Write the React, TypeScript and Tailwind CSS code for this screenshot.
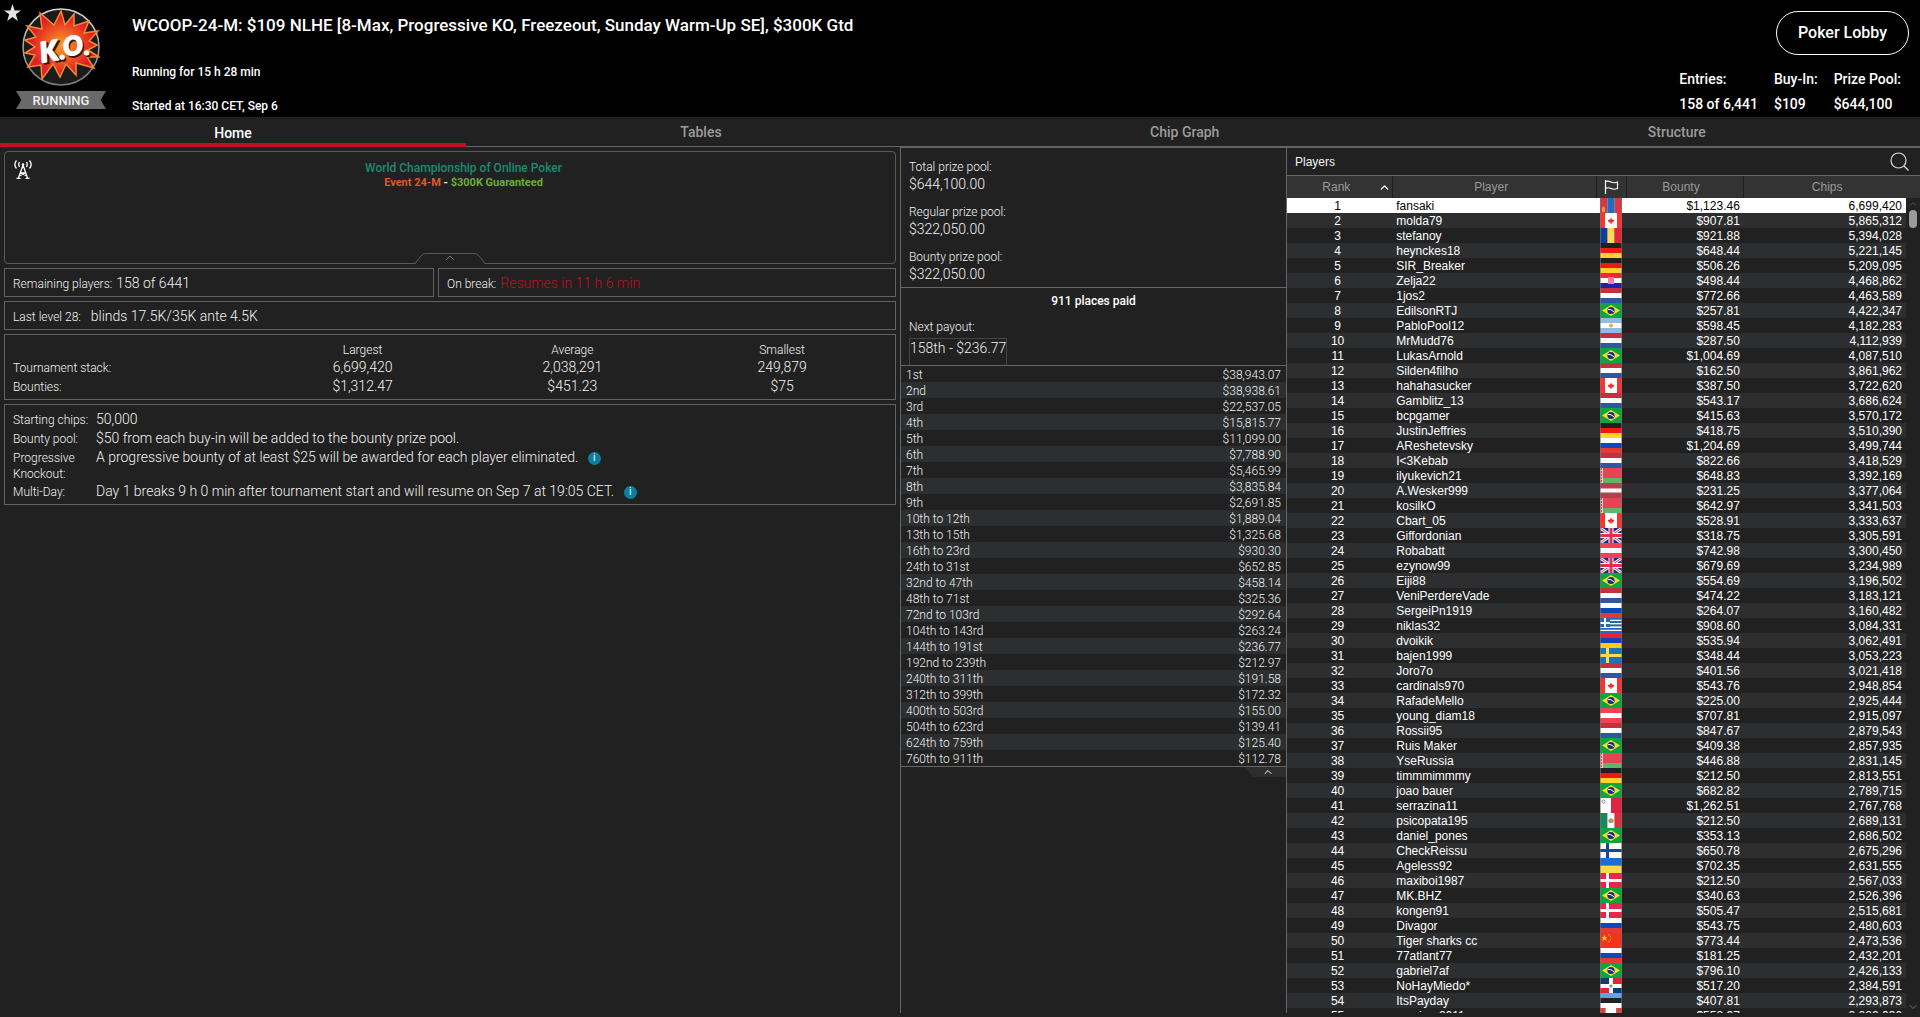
import type { ReactNode } from "react";
import { ChevronUp, ChevronDown } from "lucide-react";

const payouts = [
  ["1st", "$38,943.07"],
  ["2nd", "$38,938.61"],
  ["3rd", "$22,537.05"],
  ["4th", "$15,815.77"],
  ["5th", "$11,099.00"],
  ["6th", "$7,788.90"],
  ["7th", "$5,465.99"],
  ["8th", "$3,835.84"],
  ["9th", "$2,691.85"],
  ["10th to 12th", "$1,889.04"],
  ["13th to 15th", "$1,325.68"],
  ["16th to 23rd", "$930.30"],
  ["24th to 31st", "$652.85"],
  ["32nd to 47th", "$458.14"],
  ["48th to 71st", "$325.36"],
  ["72nd to 103rd", "$292.64"],
  ["104th to 143rd", "$263.24"],
  ["144th to 191st", "$236.77"],
  ["192nd to 239th", "$212.97"],
  ["240th to 311th", "$191.58"],
  ["312th to 399th", "$172.32"],
  ["400th to 503rd", "$155.00"],
  ["504th to 623rd", "$139.41"],
  ["624th to 759th", "$125.40"],
  ["760th to 911th", "$112.78"]
];

const players = [
  ["fansaki", "mn", "$1,123.46", "6,699,420"],
  ["molda79", "ca", "$907.81", "5,865,312"],
  ["stefanoy", "ro", "$921.88", "5,394,028"],
  ["heynckes18", "de", "$648.44", "5,221,145"],
  ["SIR_Breaker", "de", "$506.26", "5,209,095"],
  ["Zelja22", "hr", "$498.44", "4,468,862"],
  ["1jos2", "nl", "$772.66", "4,463,589"],
  ["EdilsonRTJ", "br", "$257.81", "4,422,347"],
  ["PabloPool12", "ar", "$598.45", "4,182,283"],
  ["MrMudd76", "nl", "$287.50", "4,112,939"],
  ["LukasArnold", "br", "$1,004.69", "4,087,510"],
  ["Silden4filho", "nl", "$162.50", "3,861,962"],
  ["hahahasucker", "ca", "$387.50", "3,722,620"],
  ["Gamblitz_13", "nl", "$543.17", "3,686,624"],
  ["bcpgamer", "br", "$415.63", "3,570,172"],
  ["JustinJeffries", "de", "$418.75", "3,510,390"],
  ["AReshetevsky", "ru", "$1,204.69", "3,499,744"],
  ["I<3Kebab", "nl", "$822.66", "3,418,529"],
  ["ilyukevich21", "by", "$648.83", "3,392,169"],
  ["A.Wesker999", "lv", "$231.25", "3,377,064"],
  ["kosilkO", "by", "$642.97", "3,341,503"],
  ["Cbart_05", "ca", "$528.91", "3,333,637"],
  ["Giffordonian", "gb", "$318.75", "3,305,591"],
  ["Robabatt", "at", "$742.98", "3,300,450"],
  ["ezynow99", "gb", "$679.69", "3,234,989"],
  ["Eiji88", "br", "$554.69", "3,196,502"],
  ["VeniPerdereVade", "nl", "$474.22", "3,183,121"],
  ["SergeiPn1919", "ru", "$264.07", "3,160,482"],
  ["niklas32", "gr", "$908.60", "3,084,331"],
  ["dvoikik", "am", "$535.94", "3,062,491"],
  ["bajen1999", "se", "$348.44", "3,053,223"],
  ["Joro7o", "nl", "$401.56", "3,021,418"],
  ["cardinals970", "ca", "$543.76", "2,948,854"],
  ["RafadeMello", "br", "$225.00", "2,925,444"],
  ["young_diam18", "at", "$707.81", "2,915,097"],
  ["Rossii95", "nl", "$847.67", "2,879,543"],
  ["Ruis Maker", "br", "$409.38", "2,857,935"],
  ["YseRussia", "by", "$446.88", "2,831,145"],
  ["timmmimmmy", "de", "$212.50", "2,813,551"],
  ["joao bauer", "br", "$682.82", "2,789,715"],
  ["serrazina11", "mt", "$1,262.51", "2,767,768"],
  ["psicopata195", "mx", "$212.50", "2,689,131"],
  ["daniel_pones", "br", "$353.13", "2,686,502"],
  ["CheckReissu", "fi", "$650.78", "2,675,296"],
  ["Ageless92", "ua", "$702.35", "2,631,555"],
  ["maxiboi1987", "dk", "$212.50", "2,567,033"],
  ["MK.BHZ", "br", "$340.63", "2,526,396"],
  ["kongen91", "dk", "$505.47", "2,515,681"],
  ["Divagor", "ru", "$543.75", "2,480,603"],
  ["Tiger sharks cc", "cn", "$773.44", "2,473,536"],
  ["77atlant77", "ru", "$181.25", "2,432,201"],
  ["gabriel7af", "br", "$796.10", "2,426,133"],
  ["NoHayMiedo*", "do", "$517.20", "2,384,591"],
  ["ItsPayday", "ee", "$407.81", "2,293,873"],
  ["samiron2011", "pe", "$558.97", "2,282,036"]
];

function rows(...colors: string[]) {
  const h = 15 / colors.length;
  return colors.map((c, i) => <rect key={i} y={i * h} width="22" height={h} fill={c} />);
}

function cols(...colors: string[]) {
  const w = 22 / colors.length;
  return colors.map((c, i) => <rect key={i} x={i * w} width={w} height="15" fill={c} />);
}

function nordic(bg: string, cross: string) {
  return (
    <>
      <rect width="22" height="15" fill={bg} />
      <path d="M6 0h3v15h-3zM0 6h22v3H0z" fill={cross} />
    </>
  );
}

const flags: Record<string, ReactNode> = {
  mn: (
    <>
      {cols("#dc3545", "#1a6fc0", "#dc3545")}
      <path d="M2 14v-4l1.500-2 1.500 2v4z" fill="#f4933a" />
    </>
  ),
  ca: (
    <>
      <rect width="22" height="15" fill="#fff" />
      <path d="M0 0h5v15H0zM17 0h5v15h-5z" fill="#fb3232" />
      <path d="M11 4.500l1 2 2.500.5-1.500 2.500h-1.500v1.500h-1v-1.500H9L7.500 7l2.500-.5z" fill="#ec2c33" />
    </>
  ),
  ro: cols("#0c3f97", "#fcd85a", "#e0253f"),
  de: rows("#202020", "#ee1a12", "#ffd22c"),
  hr: (
    <>
      {rows("#fb2430", "#fff", "#2020a8")}
      <rect x="8" y="4" width="6" height="7" fill="#f58296" />
    </>
  ),
  nl: rows("#c5303f", "#fff", "#30569f"),
  br: (
    <>
      <rect width="22" height="15" fill="#0ca63f" />
      <path d="M2 7.500L11 2l9 5.500L11 13z" fill="#f5dc33" />
      <circle cx="11" cy="7.500" r="3.600" fill="#15307c" />
      <path d="M7.800 6.300Q11 6 14 8.800" stroke="#fff" fill="none" />
    </>
  ),
  ar: (
    <>
      {rows("#8fbbe4", "#fff", "#8fbbe4")}
      <circle cx="11" cy="7.500" r="2" fill="#eda644" />
    </>
  ),
  ru: rows("#fff", "#0f47b8", "#e03c35"),
  by: (
    <>
      <rect width="22" height="15" fill="#e84352" />
      <rect y="10" width="22" height="5" fill="#5cb866" />
      <rect width="3" height="15" fill="#f6c9cc" />
      <path d="M1.500 0v15" stroke="#e84352" strokeDasharray="2 1" />
    </>
  ),
  lv: (
    <>
      <rect width="22" height="15" fill="#b3404c" />
      <rect y="5.500" width="22" height="4" fill="#fff" />
    </>
  ),
  gb: (
    <>
      <rect width="22" height="15" fill="#1c2688" />
      <path d="M0 0l22 15M22 0L0 15" stroke="#fff" strokeWidth="3" />
      <path d="M0 0l22 15M22 0L0 15" stroke="#e0304c" />
      <path d="M11 0v15M0 7.500h22" stroke="#fff" strokeWidth="5" />
      <path d="M11 0v15M0 7.500h22" stroke="#e0304c" strokeWidth="3" />
    </>
  ),
  at: rows("#f04454", "#fff", "#f04454"),
  gr: (
    <>
      {rows("#1f68ba", "#fff", "#1f68ba", "#fff", "#1f68ba", "#fff", "#1f68ba", "#fff", "#1f68ba")}
      <rect width="10" height="9" fill="#1f68ba" />
      <path d="M5 0v9M0 5h10" stroke="#fff" strokeWidth="2" />
    </>
  ),
  am: rows("#ee1c35", "#1443b4", "#fdc81e"),
  se: nordic("#1a76b2", "#ffd84e"),
  mt: (
    <>
      {cols("#fff", "#de2440")}
      <circle cx="3.500" cy="3.500" r="1.500" stroke="#888" fill="none" />
    </>
  ),
  mx: (
    <>
      {cols("#138a5c", "#fff", "#e03040")}
      <path d="M8 7l3-2 3 2-1 3H9z" fill="#b59467" />
    </>
  ),
  fi: nordic("#fff", "#104a9c"),
  ua: rows("#176fd4", "#ffd944"),
  dk: nordic("#ea2648", "#fff"),
  cn: (
    <>
      <rect width="22" height="15" fill="#f5331a" />
      <path d="M4.500 2l1 2h2L6 5.500 6.500 8l-2-1.500L2.500 8 3 5.500 1.500 4h2z" fill="#fdc530" />
      <path d="M9 1v1.500M10.500 3v1.500M10.500 6v1.500M9 8v1.500" stroke="#fdb030" />
    </>
  ),
  do: (
    <>
      <rect width="22" height="15" fill="#fff" />
      <path d="M0 0h9v6H0zM13 10h9v5h-9z" fill="#0f3b78" />
      <path d="M13 0h9v6h-9zM0 10h9v5H0z" fill="#e22437" />
      <circle cx="11" cy="8" r="1.600" fill="#6aa37a" />
    </>
  ),
  ee: rows("#5ea2e8", "#222", "#fff"),
  pe: cols("#dd4040", "#fff", "#fff", "#dd4040")
};

function Flag({ code }: { code: string }) {
  return (
    <svg width="22" height="15" viewBox="0 0 22 15" className="mx-auto block" role="img" aria-label={code}>
      {flags[code]}
      <path d="M.5 0v15M21.500 0v15" stroke="#777" strokeOpacity="0.6" />
    </svg>
  );
}

function KoBadge() {
  return (
    <svg width="78" height="78" viewBox="0 0 78 78" aria-label="Knockout">
      <defs>
        <radialGradient id="blast">
          <stop offset="0" stopColor="#f9a11f" />
          <stop offset="0.450" stopColor="#ef5a24" />
          <stop offset="0.850" stopColor="#dd1f26" />
        </radialGradient>
        <linearGradient id="ring" x2="0" y2="1">
          <stop offset="0" stopColor="#d8d8d8" />
          <stop offset="1" stopColor="#777" />
        </linearGradient>
      </defs>
      <circle cx="39" cy="39" r="38" fill="#1b1b1b" stroke="url(#ring)" strokeWidth="1.500" />
      <path
        d="M39 3L43 17 52 6 52 18 67 13 62 25 76 23 67 33 75 37 66 42 77 49 65 49 72 60 54 55 54 67 44 56 38 69 31 56 20 71 19 57 6 59 13 47 3 45 13 39 3 32 14 29 5 18 20 21 18 5 32 17Z"
        fill="url(#blast)"
        stroke="#f58a2c"
        strokeWidth="1.500"
      />
      <g fontFamily="Lato, sans-serif" fontWeight="900" fontStyle="italic" strokeLinejoin="round">
        <g transform="rotate(-10 39 39)" fill="#3a120c" stroke="#3a120c" strokeWidth="1.500">
          <text x="19" y="53" fontSize="28">K</text>
          <text x="37" y="53" fontSize="24">.</text>
          <text x="42" y="51" fontSize="26">O</text>
          <text x="62" y="53" fontSize="24">.</text>
        </g>
        <g transform="rotate(-10 39 39)" fill="#fff" stroke="#fff" strokeWidth="1.500">
          <text x="17" y="51" fontSize="28">K</text>
          <text x="36" y="51" fontSize="24">.</text>
          <text x="41" y="49" fontSize="26">O</text>
          <text x="61" y="51" fontSize="24">.</text>
        </g>
      </g>
    </svg>
  );
}

function Antenna() {
  return (
    <svg width="18" height="19" viewBox="0 0 18 19" fill="none" stroke="#fff" strokeWidth="1.300">
      <path d="M9 5L4.500 18M9 5l4.500 13M6.500 13h5M6 15.500l6-2.500M12 15.500L6 13M2.500 18.300h4M11.500 18.300h4" />
      <path d="M5.500 2Q4 4.500 5.500 7M12.500 2Q14 4.500 12.500 7M2.500.5Q-.8 4.500 2.500 8.500M15.500.5Q18.800 4.500 15.500 8.500" />
      <circle cx="9" cy="4.500" r="1.300" fill="#fff" stroke="none" />
    </svg>
  );
}

function InfoDot() {
  return (
    <button
      aria-label="More info"
      className="ml-1.5 inline-flex size-[13px] items-center justify-center rounded-full bg-[#0b7f9f] align-[1px] text-[10px] leading-none font-normal text-white"
    >
      i
    </button>
  );
}

function Box({ className = "", children }: { className?: string; children: ReactNode }) {
  return <section className={`border border-[#636363] px-2 ${className}`}>{children}</section>;
}

function HeaderStat({ label, value }: { label: string; value: string }) {
  return (
    <div>
      <dt>{label}</dt>
      <dd>{value}</dd>
    </div>
  );
}

function Header() {
  return (
    <header className="flex h-[117px] shrink-0 justify-between bg-black font-medium text-white">
      <div className="flex">
        <svg width="17" height="17" viewBox="0 0 24 24" fill="#e4e4e4" className="mt-1 ml-1 shrink-0">
          <path d="M12 0l3 9h9l-7.300 5.500L19.500 24 12 18.200 4.500 24l2.800-9.500L0 9h9z" />
        </svg>
        <div className="-ml-[5px] flex w-[90px] flex-col items-center pt-2">
          <KoBadge />
          <div className="mt-[5px] flex h-[18px] w-full items-center justify-center bg-[#696969] pt-0.5 text-[13px] text-[#f0f0f0] [clip-path:polygon(0_0,100%_0,94%_50%,100%_100%,0_100%,6%_50%)]">
            RUNNING
          </div>
        </div>
        <div className="ml-[26px] pt-[14px]">
          <h1 className="text-[17px] leading-[22px]">
            WCOOP-24-M: $109 NLHE [8-Max, Progressive KO, Freezeout, Sunday Warm-Up SE], $300K Gtd
          </h1>
          <p className="mt-[27px] text-[12px] leading-[18px]">Running for 15 h 28 min</p>
          <p className="mt-4 text-[12px] leading-[18px]">Started at 16:30 CET, Sep 6</p>
        </div>
      </div>
      <div className="flex flex-col items-end pt-[11px] pr-[11px]">
        <button className="h-11 w-[133px] rounded-full border border-white text-[16px]">Poker Lobby</button>
        <dl className="mt-3 mr-2 flex gap-4 text-[14px] leading-[25px]">
          <HeaderStat label="Entries:" value="158 of 6,441" />
          <HeaderStat label="Buy-In:" value="$109" />
          <HeaderStat label="Prize Pool:" value="$644,100" />
        </dl>
      </div>
    </header>
  );
}

function Tabs() {
  return (
    <nav className="flex h-[30px] shrink-0 text-[14px] font-medium text-[#9b9b9b]">
      <button className="flex-auto border-b-4 border-[#c20e26] pt-1.5 text-white">Home</button>
      {["Tables", "Chip Graph", "Structure"].map((tab) => (
        <button key={tab} className="flex-auto border-b border-[#666] pt-0.5">
          {tab}
        </button>
      ))}
    </nav>
  );
}

function TournamentInfo() {
  const details: [string, ReactNode][] = [
    ["Starting chips:", "50,000"],
    ["Bounty pool:", "$50 from each buy-in will be added to the bounty prize pool."],
    [
      "Progressive Knockout:",
      <>
        A progressive bounty of at least $25 will be awarded for each player eliminated. <InfoDot />
      </>
    ],
    [
      "Multi-Day:",
      <>
        Day 1 breaks 9 h 0 min after tournament start and will resume on Sep 7 at 19:05 CET. <InfoDot />
      </>
    ]
  ];
  return (
    <main className="flex flex-col gap-1 p-1 text-[12px]">
      <section className="relative flex h-[113px] rounded border border-[#5a5a5a] pt-2 pl-[9px]">
        <Antenna />
        <div className="flex-1 text-center">
          <h2 className="text-[12px] leading-4 font-medium text-[#1e8a72]">World Championship of Online Poker</h2>
          <p className="text-[11px] leading-[13px] font-bold text-white">
            <span className="text-[#dd5a2a]">Event 24-M</span> - <span className="text-[#6cad38]">$300K Guaranteed</span>
          </p>
        </div>
        <button aria-label="Collapse banner" className="absolute -bottom-px left-1/2 -translate-x-1/2">
          <svg width="70" height="11" viewBox="0 0 70 11" fill="none" stroke="#5a5a5a" className="block">
            <path d="M0 10.500L6 3Q8 .5 11 .5H59Q62 .5 64 3L70 10.500" fill="#212121" stroke="none" />
            <path d="M1 10.500h68" stroke="#212121" />
            <path d="M0 10.500L6 3Q8 .5 11 .5H59Q62 .5 64 3L70 10.500" />
            <path d="M31 7l4-4 4 4" stroke="#777" />
          </svg>
        </button>
      </section>

      <div className="grid grid-cols-[430fr_458fr] gap-1">
        <Box className="flex items-baseline gap-1 pt-[5px] pb-[3px]">
          <span>Remaining players:</span>
          <span className="text-[14px] leading-[19px]">158 of 6441</span>
        </Box>
        <Box className="flex items-baseline gap-1 pt-[5px] pb-[3px]">
          <span>On break:</span>
          <span className="text-[14px] leading-[19px] text-[#c20e26]">Resumes in 11 h 6 min</span>
        </Box>
      </div>

      <Box className="flex items-baseline gap-2.5 pt-[5px] pb-[3px]">
        <span>Last level 28:</span>
        <span className="text-[14px] leading-[19px]">blinds 17.5K/35K ante 4.5K</span>
      </Box>

      <Box className="pt-[7px] pb-[3px]">
        <table className="w-full table-fixed text-center">
          <thead>
            <tr className="leading-4">
              <td className="w-[28%]" />
              <th className="font-light">Largest</th>
              <th className="font-light">Average</th>
              <th className="font-light">Smallest</th>
            </tr>
          </thead>
          <tbody className="align-baseline text-[14px] leading-[19px]">
            <tr>
              <th className="text-left text-[12px] leading-4 font-light">Tournament stack:</th>
              <td>6,699,420</td>
              <td>2,038,291</td>
              <td>249,879</td>
            </tr>
            <tr>
              <th className="text-left text-[12px] leading-4 font-light">Bounties:</th>
              <td>$1,312.47</td>
              <td>$451.23</td>
              <td>$75</td>
            </tr>
          </tbody>
        </table>
      </Box>

      <Box className="pt-[5px] pb-[3px]">
        <dl className="grid grid-cols-[83px_1fr]">
          {details.map(([label, value]) => (
            <div key={label} className="contents">
              <dt className="pt-0.5 leading-4">{label}</dt>
              <dd className="text-[14px] leading-[19px]">{value}</dd>
            </div>
          ))}
        </dl>
      </Box>
    </main>
  );
}

function PrizePanel() {
  const pools = [
    ["Total prize pool:", "$644,100.00"],
    ["Regular prize pool:", "$322,050.00"],
    ["Bounty prize pool:", "$322,050.00"]
  ];
  return (
    <aside className="border-t border-l border-[#666] text-[12px]">
      <dl className="flex flex-col gap-2.5 border-b border-[#666] px-2 pt-[11px] pb-[3px]">
        {pools.map(([label, value]) => (
          <div key={label}>
            <dt className="leading-4">{label}</dt>
            <dd className="text-[14px] leading-[19px]">{value}</dd>
          </div>
        ))}
      </dl>
      <div className="border-b border-[#666] px-2 pt-1">
        <h2 className="text-center leading-[18px] font-medium text-white">911 places paid</h2>
        <p className="mt-[9px] leading-4">Next payout:</p>
        <p className="mt-[3px] w-fit border border-b-0 border-[#444] pb-[7px] text-[14px] leading-[19px]">158th - $236.77</p>
      </div>
      <table className="w-full border-b border-[#666] leading-[14px]">
        <tbody>
          {payouts.map(([place, prize]) => (
            <tr key={place} className="even:bg-[#2c2e2f]">
              <td className="pt-0.5 pl-[5px]">{place}</td>
              <td className="pt-0.5 pr-[5px] text-right">{prize}</td>
            </tr>
          ))}
        </tbody>
      </table>
      <button
        aria-label="Collapse payouts"
        className="ml-auto flex h-2.5 w-[41px] items-center justify-center bg-[#2d2d2d] pl-1 [clip-path:polygon(0_0,100%_0,100%_100%,20%_100%)]"
      >
        <ChevronUp size={12} color="#fff" strokeWidth={2} />
      </button>
    </aside>
  );
}

function PlayersPanel() {
  return (
    <section className="flex min-h-0 flex-col overflow-hidden border-t border-l border-[#666] font-['Liberation_Sans',Arial,sans-serif] text-[12px] font-normal">
      <div className="flex h-7 shrink-0 items-center justify-between border-b border-[#666] pr-[11px] pl-2">
        <h2>Players</h2>
        <button aria-label="Search players">
          <svg width="19" height="19" viewBox="0 0 19 19" fill="none" stroke="#ddd" strokeWidth="1.200" className="block">
            <circle cx="8.500" cy="8.500" r="7.500" />
            <path d="M14 14l4.500 4.500" />
          </svg>
        </button>
      </div>
      <div className="flex min-h-0 flex-1">
        <div className="min-w-0 flex-1 overflow-hidden">
          <table className="w-full table-fixed text-white">
            <thead className="h-[22px] bg-[#333] leading-[15px] text-[#999]">
              <tr>
                <th className="w-[17%] border-r border-[#1e1e1e] font-normal">
                  <span className="flex items-center justify-end pr-px">
                    <span className="flex-1 pl-2">Rank</span>
                    <ChevronUp size={13} color="#fff" strokeWidth={2.5} />
                  </span>
                </th>
                <th className="border-r border-[#1e1e1e] pr-1.5 font-normal">Player</th>
                <th className="w-[30px] border-r border-[#1e1e1e]">
                  <svg width="15" height="14" viewBox="0 0 15 14" fill="none" stroke="#fff" strokeWidth="1.200" className="mx-auto block" aria-label="Country">
                    <path d="M1.500 0v14M1.500 1.500Q4 .5 7 2t6.500 0v6.500Q10 10 7 8.500t-5.500 0" />
                  </svg>
                </th>
                <th className="w-[19%] border-r border-[#1e1e1e] pr-2 font-normal">Bounty</th>
                <th className="w-[26.2%] pl-1 font-normal">Chips</th>
              </tr>
            </thead>
            <tbody className="leading-[13px]">
              {players.map(([name, flag, bounty, chips], i) => (
                <tr key={name} className={i === 0 ? "bg-white text-black" : "even:bg-[#2c2e2f]"}>
                  <td className="pt-0.5 pr-1 text-center">{i + 1}</td>
                  <td className="pt-0.5 pl-1">{name}</td>
                  <td>
                    <Flag code={flag} />
                  </td>
                  <td className="pt-0.5 pr-1 text-right">{bounty}</td>
                  <td className="pt-0.5 pr-1 text-right">{chips}</td>
                </tr>
              ))}
            </tbody>
          </table>
        </div>
        <div className="flex w-3.5 flex-col items-center">
          <div className="h-[22px] w-full shrink-0 bg-[#333]" />
          <ChevronUp size={12} color="#555" className="shrink-0" />
          <div className="h-[18px] w-2 shrink-0 rounded bg-[#9a9a9a]" />
          <ChevronDown size={12} color="#777" className="mt-auto shrink-0" />
        </div>
      </div>
    </section>
  );
}

export default function App() {
  return (
    <div className="flex h-screen flex-col overflow-hidden bg-[#212121] pb-1 font-[Roboto,sans-serif] font-light text-[#f2f2f2]">
      <Header />
      <Tabs />
      <div className="grid min-h-0 flex-1 grid-cols-[minmax(0,900fr)_minmax(0,386fr)_minmax(0,634fr)]">
        <TournamentInfo />
        <PrizePanel />
        <PlayersPanel />
      </div>
    </div>
  );
}
